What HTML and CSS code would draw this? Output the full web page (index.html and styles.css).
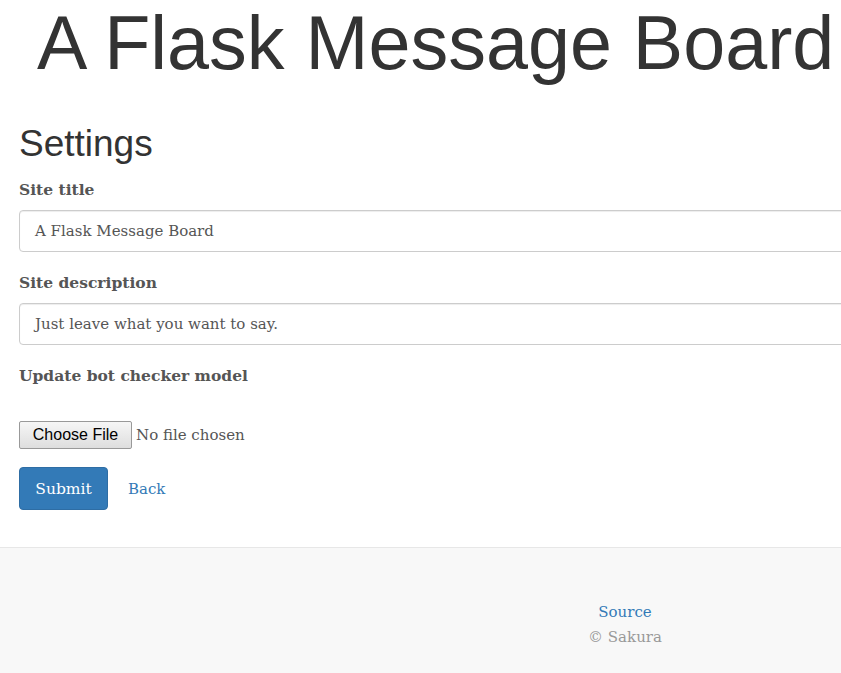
FILE: index.html
```html
<!DOCTYPE html>
<html>
<head>
<meta charset="utf-8">
<title>Settings</title>
<link rel="stylesheet" href="styles.css">
</head>
<body>
<div class="page">
  <header class="masthead">
    <h1 class="site-title">A Flask Message Board</h1>
  </header>
  <main class="content">
    <h2 class="page-title">Settings</h2>
    <form class="settings-form">
      <div class="form-group">
        <label class="form-label">Site title</label>
        <div class="form-control">A Flask Message Board</div>
      </div>
      <div class="form-group">
        <label class="form-label">Site description</label>
        <div class="form-control">Just leave what you want to say.</div>
      </div>
      <div class="form-group">
        <label class="form-label">Update bot checker model</label>
      </div>
      <div class="file-row">
        <span class="file-button">Choose File</span>
        <span class="file-status">No file chosen</span>
      </div>
      <div class="actions">
        <span class="btn-primary">Submit</span>
        <a class="back-link" href="#">Back</a>
      </div>
    </form>
  </main>
  <footer class="footer">
    <a class="footer-link" href="#">Source</a>
    <div class="footer-copy">© Sakura</div>
  </footer>
</div>
</body>
</html>
```
FILE: styles.css
```css
html, body {
  margin: 0;
  padding: 0;
  overflow: hidden;
  background: #fff;
}
.page {
  width: 1250px;
  font-family: "DejaVu Serif", serif;
  color: #555;
}
.masthead {
  padding: 0 0 0 37px;
  height: 118px;
}
.site-title {
  margin: 0;
  padding-top: 3px;
  font-family: "Liberation Sans", Arial, sans-serif;
  font-weight: normal;
  font-size: 75.5px;
  line-height: 80px;
  color: #333;
}
.content {
  padding: 0 19px;
  height: 429px;
}
.page-title {
  margin: 0 0 13px;
  padding-top: 3px;
  font-family: "Liberation Sans", Arial, sans-serif;
  font-weight: normal;
  font-size: 37px;
  line-height: 46px;
  color: #333;
}
.settings-form {
  display: flex;
  flex-direction: column;
}
.form-group {
  display: flex;
  flex-direction: column;
  margin-bottom: 21px;
}
.form-label {
  font-weight: bold;
  font-size: 15.5px;
  line-height: 20px;
  margin-bottom: 10px;
  color: #555;
}
.form-control {
  height: 42px;
  box-sizing: border-box;
  border: 1px solid #ccc;
  border-radius: 4px;
  padding: 0 15px;
  display: flex;
  align-items: center;
  font-size: 15px;
  color: #555;
  box-shadow: inset 0 1px 1px rgba(0,0,0,.075);
}
.file-row {
  display: flex;
  align-items: center;
  gap: 4px;
  margin-top: 4px;
}
.file-button {
  box-sizing: border-box;
  width: 113px;
  height: 28px;
  display: flex;
  align-items: center;
  justify-content: center;
  border: 1px solid #999;
  border-radius: 2px;
  background: linear-gradient(#f6f6f6, #dedede);
  font-family: "Liberation Sans", Arial, sans-serif;
  font-size: 16px;
  color: #000;
}
.file-status {
  font-size: 15px;
  color: #555;
}
.actions {
  display: flex;
  align-items: center;
  gap: 20px;
  margin-top: 18px;
}
.btn-primary {
  box-sizing: border-box;
  width: 89px;
  height: 43px;
  display: flex;
  align-items: center;
  justify-content: center;
  background: #337ab7;
  border: 1px solid #2e6da4;
  border-radius: 4px;
  color: #fff;
  font-size: 15.5px;
}
.back-link {
  color: #337ab7;
  text-decoration: none;
  font-size: 15px;
}
.footer {
  box-sizing: border-box;
  height: 127px;
  border-top: 1px solid #e7e7e7;
  background: #f8f8f8;
  display: flex;
  flex-direction: column;
  align-items: center;
  padding-top: 52px;
  font-size: 15px;
  line-height: 25px;
}
.footer-link {
  color: #337ab7;
  text-decoration: none;
}
.footer-copy {
  color: #999;
}
```
